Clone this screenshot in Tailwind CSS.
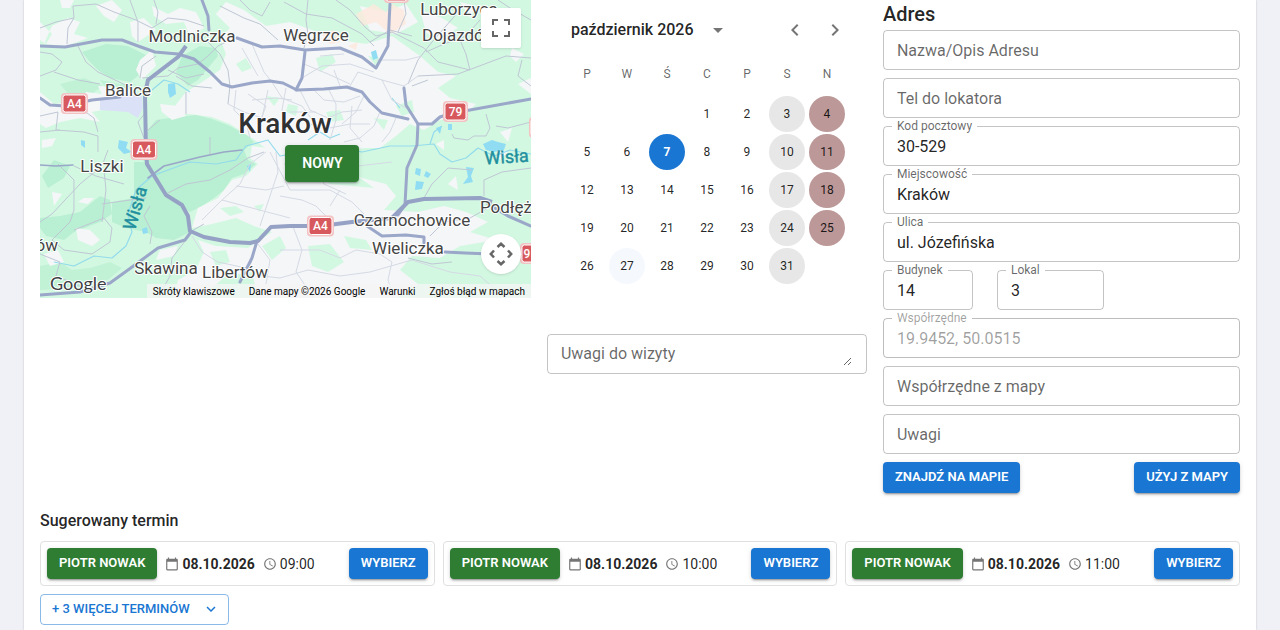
<!DOCTYPE html>
<html lang="pl">
<head>
    <meta charset="UTF-8">
    <meta name="viewport" content="width=device-width, initial-scale=1.0">
    <title>Nowa wizyta</title>
    <script src="https://cdn.jsdelivr.net/npm/@tailwindcss/browser@4"></script>
</head>
<body class="bg-[#f0f1f6] font-['Roboto',sans-serif] text-black/87">

    <main class="mx-6 min-h-screen bg-white px-4 pb-1 shadow-[0_0_2px_rgba(0,0,0,0.2)]">
        <div class="grid grid-cols-[minmax(0,11fr)_320px_minmax(0,8fr)] items-start gap-x-4">

            <!-- Mapa -->
            <section class="relative h-[298px] overflow-hidden bg-[#d3f8e2]" aria-label="Mapa">
                <svg class="block h-full w-full" viewBox="0 0 491 298" preserveAspectRatio="xMidYMid slice" font-family="Roboto, sans-serif">
                    <!-- lasy -->
                    <g fill="#b9efd2">
                        <path d="M42 52 66 44 88 46 108 56 112 64 103 72 90 82 70 78 58 70 50 62Z"/>
                        <path d="M142 56 160 46 176 48 178 56 168 68 158 80 148 86 136 72Z"/>
                        <path d="M108 130 116 120 130 118 156 115 172 119 190 126 208 136 214 142 204 150 208 160 216 164 204 174 192 178 184 190 174 198 162 206 150 212 140 204 126 196 106 162 94 156 96 146 108 142Z"/>
                        <path d="M72 202 94 198 94 162 106 162 126 196 142 206 148 216 150 232 134 240 116 238 106 232 86 228 72 222Z"/>
                        <path d="M2 176 14 160 30 166 24 178 8 188ZM0 218 20 216 40 212 60 196 70 200 72 214 60 222 34 232 24 240 6 236 0 228Z"/>
                        <path d="M0 266 20 262 32 270 50 268 70 262 82 268 68 280 38 288 0 290Z" opacity=".7"/>
                        <path d="M20 84 44 78 62 86 52 94 30 96ZM60 80 80 84 96 84 88 90 66 88Z" opacity=".7"/>
                    </g>
                    <!-- zabudowa -->
                    <g fill="#f5f6f8">
                        <path d="M146 92 162 82 180 70 186 54 180 38 190 28 176 14 186 2 204 10 226 26 250 22 272 30 300 40 326 44 352 36 380 56 398 72 416 76 398 88 410 98 436 104 424 116 400 120 384 130 370 124 356 136 340 148 326 148 300 150 268 146 244 150 228 150 212 138 190 124 172 117 150 114 130 114 138 102Z"/>
                        <path d="M212 146 244 150 290 152 300 168 322 178 346 184 356 196 344 210 378 212 404 206 426 212 448 222 430 232 456 240 420 246 400 258 372 256 360 270 378 284 356 298 218 298 212 272 186 276 160 298 134 298 138 280 156 270 164 252 158 240 176 246 208 248 232 232 214 226 196 218 172 224 152 228 158 208 178 198 192 180 206 176 218 164 210 158Z"/>
                        <path d="M0 22 12 34 6 44 0 40ZM4 44 26 46 48 38 34 34 40 22 28 18 12 26ZM90 22 104 18 116 30 98 42 92 36ZM56 6 72 0 82 10 74 22 64 16ZM100 60 112 50 116 66 102 80 96 70ZM0 92 14 104 34 102 46 92 62 94 58 86 84 88 96 92 92 104 52 112 60 122 40 118 20 122 6 128 0 124Z"/>
                        <path d="M120 104 138 106 146 116 132 120 122 112ZM20 0 34 0 30 8 22 8ZM112 6 128 14 140 8 156 12 164 28 150 36 144 22 126 24 114 16ZM2 140 16 138 12 146 2 148ZM44 198 54 198 48 204 38 202ZM12 192 22 194 14 206ZM36 228 50 230 60 240 52 246 38 240ZM120 250 138 246 134 256 116 260ZM4 254 18 250 24 262 10 266ZM320 6 346 12 366 4 378 22 356 34 330 30ZM380 10 402 18 418 28 396 40 386 32ZM420 2 436 6 430 18ZM472 48 484 54 476 62 470 56ZM478 84 491 78 491 94ZM396 144 404 140 404 150ZM460 132 472 128 468 142ZM456 148 468 152 460 160ZM408 184 416 176 418 190ZM300 254 320 248 316 262 300 266Z"/>
                    </g>
                    <!-- parki w mieście -->
                    <g fill="#d3f8e2">
                        <path d="M196 64 206 58 212 68 202 72ZM276 58 292 54 296 62 280 72ZM248 104 258 106 256 116 246 112ZM356 106 372 100 374 112 362 116ZM226 96 240 98 234 106ZM286 112 300 110 304 120 290 122ZM334 118 348 120 344 130ZM272 168 286 164 312 172 334 188 312 186 290 184ZM174 236 196 230 206 238 188 242ZM318 160 330 150 350 152 352 170 338 178ZM214 206 224 204 220 212ZM268 246 290 244 304 262 288 272 272 266ZM304 236 326 240 332 250 310 248ZM390 270 408 264 420 276 404 288 388 286ZM328 56 340 58 336 66ZM222 246 240 236 246 248 232 260ZM170 252 186 250 190 262 176 266ZM180 208 196 206 204 212 190 216Z"/>
                    </g>
                    <path fill="#fce8dc" d="M316 14 334 4 346 12 352 4 364 10 366 24 350 34 336 22 322 26ZM282 34 294 30 300 42 290 44ZM308 46 318 42 316 50Z" opacity=".8"/>
                    <path fill="#dbe1f6" d="M60 100 86 94 102 96 103 108 98 118 88 112 60 110Z"/>
                    <!-- woda -->
                    <g fill="#8fdcf3">
                        <path d="M128 84 135 83 136 94 130 98 128 92ZM41 140 45 141 45 148 41 145ZM79 140 88 142 86 148 92 152 84 154 78 148ZM331 52 336 50 338 58 333 60ZM376 168 381 169 380 176 375 174ZM386 171 391 174 388 178 384 176ZM376 181 384 182 382 189 375 190ZM426 167 434 168 431 176 433 182 423 184 428 177ZM443 144 452 140 458 142 466 144 464 150 454 152 446 150ZM396 128 402 126 400 134ZM408 124 412 124 412 130 408 130ZM102 229 107 227 108 233 103 234ZM207 166 211 164 210 172Z"/>
                    </g>
                    <g fill="none" stroke="#93dbec" stroke-width="1.2" stroke-linejoin="round">
                        <path d="M14 262 34 266 54 256 72 258 86 246 92 232 88 214 96 190 112 176 128 170 150 162 176 164 196 160 206 146 228 140 234 148 240 156 262 152 276 146 300 148 322 152 350 146 372 146 394 144 400 154 412 162 426 158 438 148 454 156 470 150 491 154"/>
                        <path d="M390 144 394 132 402 126M112 90 124 80 138 84 150 92M268 140 280 132 290 138 300 134M352 98 360 108"/>
                    </g>
                    <!-- drogi lokalne -->
                    <g fill="none" stroke="#bfc7d4" stroke-width="1">
                        <path d="M0 28 16 22 34 18 33 6 56 4 74 12 96 20 112 28 128 18 146 20 164 26M90 0 98 22 98 42M27 44 28 28 34 18M38 46 46 62 58 72 92 88M0 76 16 70 22 62 12 54 0 52M14 72 38 80 60 84M114 0 118 12 116 24M100 78 102 66 116 56M102 78 128 76 138 68 158 64 168 56 178 46 190 40"/>
                        <path d="M0 116 18 112 16 130 44 132 58 136 58 152M0 132 20 130M24 96 24 112 40 108 54 118 58 132M106 112 98 122 104 138M108 130 120 120M146 92 146 114M136 76 152 86 172 88M128 70 146 78 164 74"/>
                        <path d="M168 42 180 54 188 70 190 86 188 104M180 6 204 18 220 24 238 40M200 0 210 10 222 16 230 2M268 0 266 20 268 34 264 48M244 2 266 14 292 18 322 34 334 46M296 0 310 10 326 28 336 36 352 32 368 40 384 48 398 62 430 70 426 54 420 40M364 0 366 14 358 32M330 42 350 30 372 36M420 10 406 26 392 42 378 60 368 84M458 0 470 8 491 20M440 20 426 36 404 44 386 52M378 76 418 74 466 56 491 58M482 60 478 76 491 86M372 86 388 80"/>
                        <path d="M0 222 12 214 40 184 62 166 68 150M34 166 56 176 84 184M18 164 34 180 34 210 30 222 20 232 12 240 24 250 52 254 70 242 72 228 64 218 34 230M64 170 66 190 62 222M0 254 20 262 16 276 40 286M126 194 146 184 170 180 190 170 208 158 224 152M170 137 170 154M110 206 104 216 112 232 110 244M62 204 90 200 106 198M146 240 132 258 130 276 118 298M150 232 164 224M368 258 392 264 412 262M390 236 404 222 430 218 448 208M384 198 392 184 408 168 432 170M412 134 414 138 428 140 434 136 446 136 450 128 446 114M491 122 468 128 456 126M444 196 444 180 462 172 491 168"/>
                    </g>
                    <!-- ulice w mieście -->
                    <g fill="none" stroke="#d5dae4" stroke-width="1">
                        <path d="M188 104 204 112 222 118M212 44 224 72 232 82M202 48 218 76M337 60 366 60 382 56M310 86 318 72 342 80 364 86 378 76M196 90 194 110 206 122 210 138M208 94 226 106 220 122M232 82 242 98 262 106 274 122M246 88 242 110 250 132M260 90 270 110 288 118 302 112 322 110M272 88 284 100 304 102 320 96M288 88 296 104 296 120 290 140M262 78 282 66 310 64 334 72M264 64 288 74 310 84M280 56 304 54M294 70 300 86M340 112 334 126 320 138 304 142M312 106 310 128 322 142M324 96 316 112 302 124M356 118 350 132 342 142M342 80 352 100 366 108M270 124 290 128 310 124 330 124M250 112 276 112M212 100 236 98 252 100M228 90 222 118"/>
                        <path d="M152 236 162 252 178 262 206 268 212 262M162 220 182 200 200 184 210 164 226 152M182 200 212 208 250 218M196 186 226 190 244 186M220 226 238 172 236 152M230 152 250 190 290 190 312 202 324 214M240 196 262 200 276 206 286 216M244 164 286 168 318 166 352 162M278 166 284 184 306 194M300 190 290 206M252 224 262 250 256 272 274 298M240 250 280 250 300 258 316 250 340 254 352 262 348 280 354 298M218 244 230 260 226 284M206 268 222 276 240 278 268 270 300 276 330 272 372 260 410 272 440 276 456 290"/>
                    </g>
                    <!-- drogi główne -->
                    <g fill="none" stroke="#9aa7c9" stroke-width="3" stroke-linejoin="round" stroke-linecap="round">
                        <path d="M0 165 16 166 33 165" stroke-width="1.6"/>
                        <path d="M108 178 124 166 160 157 184 152 202 150" stroke-width="1.6"/>
                        <path d="M162 0 168 16 169 30"/>
                        <path d="M197 38 222 47 240 46 265 50 300 48 322 57 336 68 348 46 350 4"/>
                        <path d="M265 52 262 78 256 90"/>
                        <path d="M0 46 25 47 62 40 82 40 98 46 115 52 138 54 154 59 170 72 182 84 192 87 212 83 230 81 243 83 257 90 284 89 307 87 322 92 330 102 342 113 368 119"/>
                        <path d="M364 88 366 105 378 124 377 145 367 168 365 205 358 215"/>
                        <path d="M378 124 392 124 400 117 412 113 430 110 491 99"/>
                        <path d="M0 98 10 105 25 106 52 100 80 97"/>
                        <path d="M0 295 40 292 70 283 88 270 118 248 145 240 151 232"/>
                        <path d="M217 241 212 258 200 282"/>
                        <path d="M327 226 342 236 366 235 384 237 384 243"/>
                        <path d="M405 252 425 253 450 254"/>
                        <path d="M448 204 468 216 491 226"/>
                    </g>
                    <g fill="none" stroke="#95a2c5" stroke-width="4" stroke-linejoin="round">
                        <path d="M146 46 138 57 108 80 105 94 106 150 107 164 126 195 142 205 148 216 150 231 164 237 190 242 210 243 218 241 231 227 250 226 281 226 312 222 352 218 360 210 368 202 384 199 440 198 452 202"/>
                    </g>
                    <!-- numery dróg -->
                    <g fill="#f3c3c4">
                        <rect x="21" y="93" width="27" height="21" rx="4"/>
                        <rect x="90.500" y="139" width="27" height="21" rx="4"/>
                        <rect x="267" y="215.500" width="27" height="21" rx="4"/>
                        <rect x="403" y="101" width="25" height="21" rx="4"/>
                        <rect x="344" y="-18" width="25" height="21" rx="4"/>
                        <rect x="480" y="243" width="25" height="21" rx="4"/>
                        <rect x="489" y="117" width="25" height="21" rx="4"/>
                    </g>
                    <g fill="#d8595d" stroke="#fff" stroke-width="1" font-size="12" font-weight="500" text-anchor="middle">
                        <rect x="23" y="95" width="23" height="17" rx="2.500"/>
                        <rect x="92.500" y="141" width="23" height="17" rx="2.500"/>
                        <rect x="269" y="217.500" width="23" height="17" rx="2.500"/>
                        <rect x="405" y="103" width="21" height="17" rx="2.500"/>
                        <rect x="346" y="-16" width="21" height="17" rx="2.500"/>
                        <rect x="482" y="245" width="21" height="17" rx="2.500"/>
                        <rect x="491" y="119" width="21" height="17" rx="2.500"/>
                        <g fill="#fff" stroke="none">
                            <text x="34.500" y="108">A4</text>
                            <text x="104" y="154">A4</text>
                            <text x="280.500" y="230">A4</text>
                            <text x="415.500" y="116">79</text>
                            <text x="487" y="258">9</text>
                        </g>
                    </g>
                    <!-- miejscowości -->
                    <g fill="#444" stroke="#fff" stroke-width="2" stroke-linejoin="round" paint-order="stroke" font-size="17" text-anchor="middle">
                        <text x="152" y="42">Modlniczka</text>
                        <text x="276" y="41">Węgrzce</text>
                        <text x="419" y="15">Luborzyca</text>
                        <text x="382" y="41" text-anchor="start">Dojazdó</text>
                        <text x="88" y="96">Balice</text>
                        <text x="62" y="172">Liszki</text>
                        <text x="126" y="274">Skawina</text>
                        <text x="195" y="278">Libertów</text>
                        <text x="372" y="226">Czarnochowice</text>
                        <text x="368" y="254">Wieliczka</text>
                        <text x="440" y="213" text-anchor="start">Podłęż</text>
                        <text x="18" y="251" text-anchor="end">ów</text>
                        <text x="245" y="133" font-size="28" font-weight="500" fill="#303133">Kraków</text>
                    </g>
                    <g fill="#1f8f9e" font-size="18" text-anchor="middle" stroke="#1f8f9e" stroke-width=".4">
                        <text transform="translate(101 210) rotate(-74)">Wisła</text>
                        <text transform="translate(467 163) rotate(-4)">Wisła</text>
                    </g>
                    <text x="10" y="290" font-family="Lato, sans-serif" font-size="18" fill="#3c4043" stroke="#fff" stroke-width="2" paint-order="stroke">Google</text>
                </svg>

                <button type="button" class="absolute top-[145px] left-1/2 h-[37px] w-[74px] rounded bg-[#2e7d32] pb-0.5 text-sm font-semibold text-white shadow-[0_3px_1px_-2px_rgba(0,0,0,0.2),0_2px_2px_rgba(0,0,0,0.14),0_1px_5px_rgba(0,0,0,0.12)]">NOWY</button>

                <button type="button" aria-label="Pełny ekran" class="absolute top-2 right-2.5 flex size-10 items-center justify-center rounded-xs bg-white shadow">
                    <svg class="size-[18px]" viewBox="0 0 18 18" fill="#666"><path d="M0 0v6h2V2h4V0H0zm16 0h-4v2h4v4h2V0h-2zm0 16h-4v2h6v-6h-2v4zM2 12H0v6h6v-2H2v-4z"/></svg>
                </button>
                <button type="button" aria-label="Sterowanie mapą" class="absolute right-2.5 bottom-6 flex size-10 items-center justify-center rounded-full bg-white shadow">
                    <svg class="size-6" viewBox="0 0 24 24" fill="none" stroke="#666" stroke-width="2.500"><path d="M8.500 5 12 1.800 15.500 5M8.500 19l3.500 3.200 3.500-3.200M5 8.500 1.800 12 5 15.500M19 8.500l3.200 3.500-3.200 3.500"/></svg>
                </button>

                <div class="absolute right-0 bottom-0 flex h-3.5 gap-3.5 bg-[#f5f5f5]/80 px-1.5 text-[10px] leading-4 whitespace-nowrap text-black">
                    <button type="button">Skróty klawiszowe</button>
                    <span>Dane mapy ©2026 Google</span>
                    <a href="#">Warunki</a>
                    <a href="#">Zgłoś błąd w mapach</a>
                </div>
            </section>

            <!-- Kalendarz -->
            <section>
                <div class="flex h-15 items-center pr-3 pl-6">
                    <span class="font-medium">październik 2026</span>
                    <button type="button" aria-label="Wybierz rok" class="ml-3 text-black/54">
                        <svg class="size-6" viewBox="0 0 24 24" fill="currentColor"><path d="M7 10l5 5 5-5z"/></svg>
                    </button>
                    <button type="button" aria-label="Poprzedni miesiąc" class="ml-auto p-2 text-black/54">
                        <svg class="size-6" viewBox="0 0 24 24" fill="currentColor"><path d="M15.410 7.410 14 6l-6 6 6 6 1.410-1.410L10.830 12z"/></svg>
                    </button>
                    <button type="button" aria-label="Następny miesiąc" class="p-2 text-black/54">
                        <svg class="size-6" viewBox="0 0 24 24" fill="currentColor"><path d="M10 6 8.590 7.410 13.170 12l-4.580 4.590L10 18l6-6z"/></svg>
                    </button>
                </div>
                <div class="grid grid-cols-7 px-5 text-center text-xs leading-7 text-black/60">
                    <span>P</span><span>W</span><span>Ś</span><span>C</span><span>P</span><span>S</span><span>N</span>
                </div>
                <div id="days" class="mt-2 grid grid-cols-7 justify-items-center gap-y-0.5 px-5 text-xs"></div>

                <label for="uwagiWizyty" class="sr-only">Uwagi do wizyty</label>
                <div class="mt-[50px] flex rounded border border-black/23 py-[7px] pr-3.5 pl-[13px]">
                    <textarea id="uwagiWizyty" rows="1" placeholder="Uwagi do wizyty" class="h-6 w-full resize-y overflow-hidden leading-6 outline-none placeholder:text-black/60"></textarea>
                </div>
            </section>

            <!-- Adres -->
            <form>
                <h2 class="mb-0.5 text-xl leading-7 font-medium">Adres</h2>
                <div class="flex flex-col gap-2">
                    <div>
                        <label for="nazwa" class="sr-only">Nazwa/Opis Adresu</label>
                        <input id="nazwa" type="text" placeholder="Nazwa/Opis Adresu" class="block h-10 w-full rounded border border-black/23 px-[13px] outline-none placeholder:text-black/60">
                    </div>
                    <div>
                        <label for="tel" class="sr-only">Tel do lokatora</label>
                        <input id="tel" type="tel" placeholder="Tel do lokatora" class="block h-10 w-full rounded border border-black/23 px-[13px] outline-none placeholder:text-black/60">
                    </div>
                    <div class="relative">
                        <label for="kod" class="absolute -top-1.5 left-[9px] bg-white px-[5px] text-xs leading-3 text-black/60">Kod pocztowy</label>
                        <input id="kod" type="text" value="30-529" class="block h-10 w-full rounded border border-black/23 px-[13px] outline-none">
                    </div>
                    <div class="relative">
                        <label for="miejscowosc" class="absolute -top-1.5 left-[9px] bg-white px-[5px] text-xs leading-3 text-black/60">Miejscowość</label>
                        <input id="miejscowosc" type="text" value="Kraków" class="block h-10 w-full rounded border border-black/23 px-[13px] outline-none">
                    </div>
                    <div class="relative">
                        <label for="ulica" class="absolute -top-1.5 left-[9px] bg-white px-[5px] text-xs leading-3 text-black/60">Ulica</label>
                        <input id="ulica" type="text" value="ul. Józefińska" class="block h-10 w-full rounded border border-black/23 px-[13px] outline-none">
                    </div>
                    <div class="flex gap-6">
                        <div class="relative w-[90px]">
                            <label for="budynek" class="absolute -top-1.5 left-[9px] bg-white px-[5px] text-xs leading-3 text-black/60">Budynek</label>
                            <input id="budynek" type="text" value="14" class="block h-10 w-full rounded border border-black/23 px-[13px] outline-none">
                        </div>
                        <div class="relative w-3/10">
                            <label for="lokal" class="absolute -top-1.5 left-[9px] bg-white px-[5px] text-xs leading-3 text-black/60">Lokal</label>
                            <input id="lokal" type="text" value="3" class="block h-10 w-full rounded border border-black/23 px-[13px] outline-none">
                        </div>
                    </div>
                    <div class="relative">
                        <label for="wsp" class="absolute -top-1.5 left-[9px] bg-white px-[5px] text-xs leading-3 text-black/38">Współrzędne</label>
                        <input id="wsp" type="text" value="19.9452, 50.0515" disabled class="block h-10 w-full rounded border border-black/26 px-[13px] text-black/38 outline-none">
                    </div>
                    <div>
                        <label for="wspMapa" class="sr-only">Współrzędne z mapy</label>
                        <input id="wspMapa" type="text" placeholder="Współrzędne z mapy" class="block h-10 w-full rounded border border-black/23 px-[13px] outline-none placeholder:text-black/60">
                    </div>
                    <div>
                        <label for="uwagi" class="sr-only">Uwagi</label>
                        <input id="uwagi" type="text" placeholder="Uwagi" class="block h-10 w-full rounded border border-black/23 px-[13px] outline-none placeholder:text-black/60">
                    </div>
                    <div class="flex justify-between">
                        <button type="button" class="rounded bg-[#1976d2] px-3 pt-[3px] pb-[5px] text-[13px] leading-[23px] font-semibold text-white shadow-[0_3px_1px_-2px_rgba(0,0,0,0.2),0_2px_2px_rgba(0,0,0,0.14),0_1px_5px_rgba(0,0,0,0.12)]">ZNAJDŹ NA MAPIE</button>
                        <button type="button" class="rounded bg-[#1976d2] px-3 pt-[3px] pb-[5px] text-[13px] leading-[23px] font-semibold text-white shadow-[0_3px_1px_-2px_rgba(0,0,0,0.2),0_2px_2px_rgba(0,0,0,0.14),0_1px_5px_rgba(0,0,0,0.12)]">UŻYJ Z MAPY</button>
                    </div>
                </div>
            </form>
        </div>

        <h3 class="mt-4 mb-2 leading-6 font-medium">Sugerowany termin</h3>
        <div id="terms" class="grid grid-cols-3 gap-2"></div>
        <button type="button" class="mt-2 flex items-center gap-3 rounded border border-[#1976d2]/50 pt-0.5 pb-1 pr-2 pl-[11px] text-[13px] leading-[23px] font-medium text-[#1976d2]">
            + 3 WIĘCEJ TERMINÓW
            <svg class="size-[18px]" viewBox="0 0 24 24" fill="currentColor"><path d="M16.590 8.590 12 13.170 7.410 8.590 6 10l6 6 6-6z"/></svg>
        </button>
    </main>

</body>

<script>
    const days = document.getElementById("days");
    const dayBase = "size-9 rounded-full";
    const selected = 7;
    const hovered = 27;

    // 1 października 2026 to czwartek
    for (let i = 0; i < 3; i++) {
        days.innerHTML += `<span></span>`;
    }
    for (let d = 1; d <= 31; d++) {
        const weekday = (d + 2) % 7;
        let color = "";
        if (d === selected)
            color = "bg-[#1976d2] font-bold text-white";
        else if (d === hovered)
            color = "bg-[#f5f9fd]";
        else if (weekday === 5)
            color = "bg-[#e7e7e7]";
        else if (weekday === 6)
            color = "bg-[#bc9898]";
        days.innerHTML += `<button type="button" class="${dayBase} ${color}">${d}</button>`;
    }

    const terms = document.getElementById("terms");
    ["09:00", "10:00", "11:00"].forEach((hour) => {
        terms.innerHTML += `
        <div class="flex items-center rounded border border-[#e0e0e0] p-1.5">
            <button type="button" class="rounded bg-[#2e7d32] px-3 pt-[3px] pb-[5px] text-[13px] leading-[23px] font-semibold text-white shadow-[0_3px_1px_-2px_rgba(0,0,0,0.2),0_2px_2px_rgba(0,0,0,0.14),0_1px_5px_rgba(0,0,0,0.12)]">PIOTR NOWAK</button>
            <span class="ml-2 flex items-center gap-[3px] text-sm font-bold">
                <svg class="size-3.5" viewBox="0 0 24 24" fill="#757575"><path d="M20 3h-1V1h-2v2H7V1H5v2H4c-1.100 0-2 .9-2 2v16c0 1.100.9 2 2 2h16c1.100 0 2-.9 2-2V5c0-1.100-.9-2-2-2zm0 18H4V8h16v13z"/></svg>
                08.10.2026
            </span>
            <span class="ml-2 flex items-center gap-[3px] text-sm">
                <svg class="size-3.5" viewBox="0 0 24 24" fill="#757575"><path d="M11.990 2C6.470 2 2 6.480 2 12s4.470 10 9.990 10C17.520 22 22 17.520 22 12S17.520 2 11.990 2zM12 20c-4.420 0-8-3.580-8-8s3.580-8 8-8 8 3.580 8 8-3.580 8-8 8zm.5-13H11v6l5.250 3.150.75-1.230-4.500-2.670z"/></svg>
                ${hour}
            </span>
            <button type="button" class="ml-auto rounded bg-[#1976d2] px-3 pt-[3px] pb-[5px] text-[13px] leading-[23px] font-semibold text-white shadow-[0_3px_1px_-2px_rgba(0,0,0,0.2),0_2px_2px_rgba(0,0,0,0.14),0_1px_5px_rgba(0,0,0,0.12)]">WYBIERZ</button>
        </div>`;
    });
</script>
</html>
